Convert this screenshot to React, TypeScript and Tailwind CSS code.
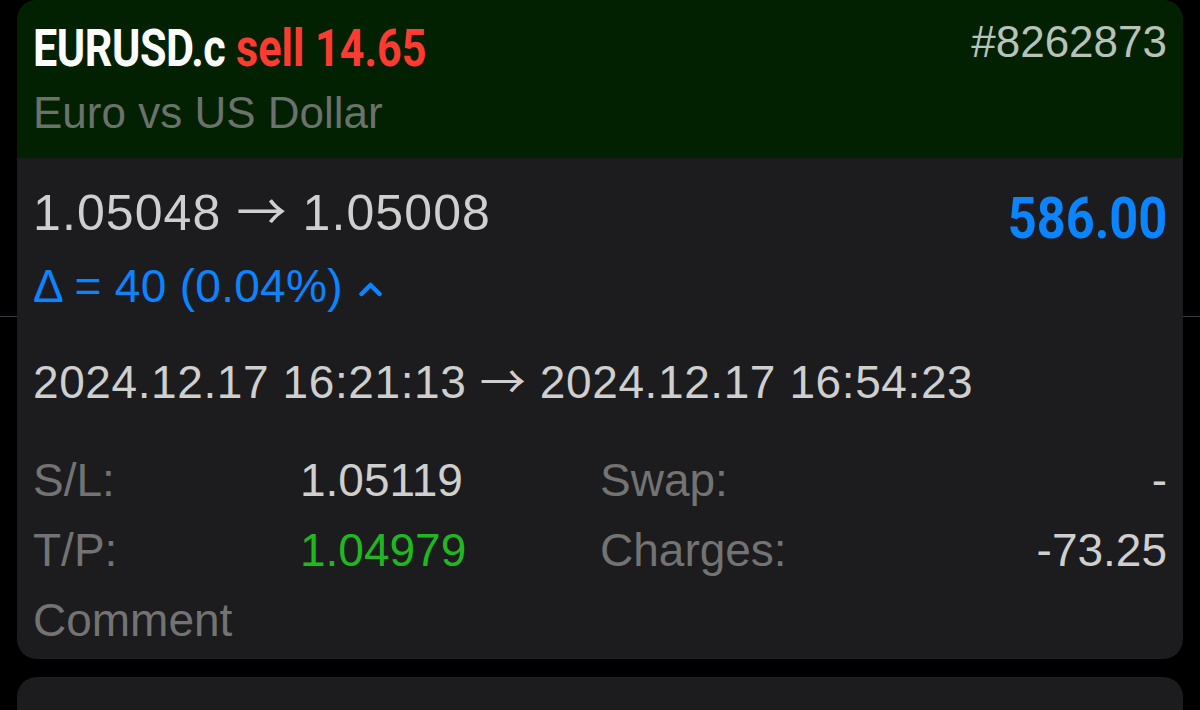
import React from "react";

const Arrow = () => (
  <span
    className="leading-[0]"
    style={{ fontFamily: '"Noto Sans CJK JP", "DejaVu Sans", sans-serif' }}
  >
    →
  </span>
);

export default function App() {
  return (
    <div
      className="relative w-[1200px] h-[710px] overflow-hidden bg-black"
      style={{ fontFamily: '"Liberation Sans", Arial, sans-serif' }}
    >
      {/* row separator behind the card */}
      <div className="absolute left-0 right-0 top-[316px] h-px bg-[#3a3a3c]" />

      <div className="relative z-10 flex flex-col px-[17px]">
        {/* Card */}
        <div className="flex flex-col overflow-hidden rounded-[20px] bg-[#1c1c1e]">
          {/* Header */}
          <div className="flex h-[158px] flex-col bg-[#012100] px-[16px] pt-[19px]">
            <div className="flex items-start justify-between">
              <div
                className="origin-left scale-x-[0.845] whitespace-nowrap text-[51px] font-bold leading-[60px]"
                style={{ fontFamily: 'Roboto, "Liberation Sans", sans-serif' }}
              >
                <span className="tracking-[-0.5px] text-white">EURUSD.c</span>{" "}
                <span className="text-[#ff3b30]">sell 14.65</span>
              </div>
              <div className="text-[44px] leading-[46px] text-[#b8c2b8]">#8262873</div>
            </div>
            <div className="mt-[9px] text-[44px] leading-[50px] text-[#6b716b]">Euro vs US Dollar</div>
          </div>

          {/* Body */}
          <div className="flex flex-col px-[16px] pt-[27px] pb-[4px]">
            <div className="flex items-start justify-between">
              <div className="flex flex-col">
                <div className="h-[56px] whitespace-nowrap text-[50px] leading-[56px] tracking-[1.1px] text-[#cfcfcf]">
                  1.05048 <Arrow /> 1.05008
                </div>
                <div className="mt-[21px] flex items-center text-[46px] leading-[48px] tracking-[0.3px] text-[#0a84ff]">
                  <span className="whitespace-nowrap">Δ = 40 (0.04%)</span>
                  <svg width="26" height="16" viewBox="0 0 26 16" className="ml-[15px] mt-[6px]">
                    <path
                      d="M3.5 13 L12.5 4 L21.5 13"
                      fill="none"
                      stroke="#0a84ff"
                      strokeWidth="4.5"
                      strokeLinecap="round"
                      strokeLinejoin="round"
                    />
                  </svg>
                </div>
              </div>
              <div
                className="mt-[3px] origin-right scale-x-[0.87] whitespace-nowrap text-[58px] font-bold leading-[60px] text-[#0a84ff]"
                style={{ fontFamily: 'Roboto, "Liberation Sans", sans-serif' }}
              >
                586.00
              </div>
            </div>

            <div className="mt-[46px] h-[52px] whitespace-nowrap text-[46px] leading-[52px] tracking-[0.6px] text-[#cfcfcf]">
              2024.12.17 16:21:13 <Arrow /> 2024.12.17 16:54:23
            </div>

            <div className="mt-[37px] grid grid-cols-[267px_300px_1fr_auto] text-[46px] leading-[70px]">
              <div className="text-[#737373]">S/L:</div>
              <div className="text-[#cfcfcf]">1.05119</div>
              <div className="text-[#737373]">Swap:</div>
              <div className="text-right text-[#cfcfcf]">-</div>

              <div className="text-[#737373]">T/P:</div>
              <div className="text-[#1fb91f]">1.04979</div>
              <div className="text-[#737373]">Charges:</div>
              <div className="text-right text-[#cfcfcf]">-73.25</div>

              <div className="col-span-4 text-[#737373]">Comment</div>
            </div>
          </div>
        </div>

        {/* Next card */}
        <div className="mt-[18px] h-[80px] rounded-[20px] bg-[#1c1c1e]" />
      </div>
    </div>
  );
}
